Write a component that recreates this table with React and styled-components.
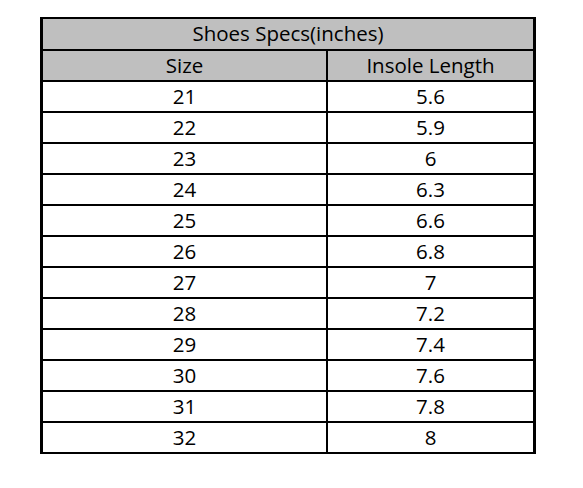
import React from 'react'
import styled, { createGlobalStyle } from 'styled-components'

const GlobalStyle = createGlobalStyle`
body {
    margin: 0;
    background: #fff;
    font-family: 'Open Sans', 'Noto Sans', sans-serif;
    color: #000;
}
`

const Page = styled.div`
width: 583px;
height: 488px;
padding: 17px 0 0 40px;
box-sizing: border-box;
`

const Table = styled.div`
width: 496px;
box-sizing: border-box;
border-left: 3px solid #000;
border-right: 3px solid #000;
border-top: 2px solid #000;
border-bottom: 2px solid #000;
`

const Row = styled.div`
display: grid;
grid-template-columns: 283px 1fr;
height: ${p => p.tall ? 30 : 29}px;
background: ${p => p.shaded ? '#bfbfbf' : '#fff'};
& + & {
    border-top: 2px solid #000;
}
`

const Title = styled.div`
grid-column: 1 / -1;
display: flex;
align-items: center;
justify-content: center;
padding-bottom: 3px;
font-size: 20.5px;
`

const Cell = styled.div`
display: flex;
align-items: center;
justify-content: center;
padding-bottom: 3px;
font-size: 20.5px;
border-left: ${p => p.divided ? '2px solid #000' : 'none'};
`

const specs = [
    ['21', '5.6'],
    ['22', '5.9'],
    ['23', '6'],
    ['24', '6.3'],
    ['25', '6.6'],
    ['26', '6.8'],
    ['27', '7'],
    ['28', '7.2'],
    ['29', '7.4'],
    ['30', '7.6'],
    ['31', '7.8'],
    ['32', '8'],
]

const App = () => {
    return (
        <Page>
            <GlobalStyle />
            <Table>
                <Row shaded tall>
                    <Title>Shoes Specs(inches)</Title>
                </Row>
                <Row shaded>
                    <Cell>Size</Cell>
                    <Cell divided>Insole Length</Cell>
                </Row>
                {specs.map(([size, length]) =>
                    <Row key={size}>
                        <Cell>{size}</Cell>
                        <Cell divided>{length}</Cell>
                    </Row>
                )}
            </Table>
        </Page>
    )
}

export default App
